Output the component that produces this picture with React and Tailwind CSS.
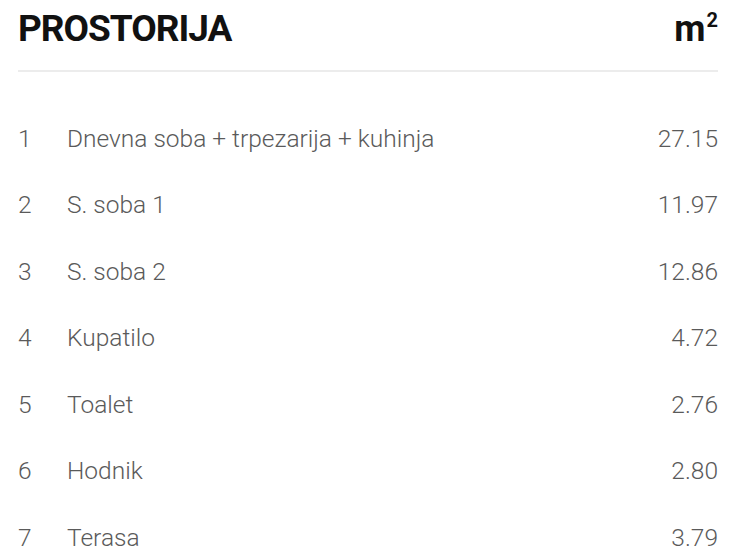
export default function App() {
  const rows = [
    ["1", "Dnevna soba + trpezarija + kuhinja", "27.15"],
    ["2", "S. soba 1", "11.97"],
    ["3", "S. soba 2", "12.86"],
    ["4", "Kupatilo", "4.72"],
    ["5", "Toalet", "2.76"],
    ["6", "Hodnik", "2.80"],
    ["7", "Terasa", "3.79"],
  ];
  return (
    <div className="w-[740px] h-[550px] overflow-hidden bg-white pl-[18px] pr-[22px] pt-[11px]" style={{ fontFamily: "Roboto, 'Liberation Sans', sans-serif" }}>
      <div className="flex items-start justify-between h-[36px]">
        <div className="text-[37px] leading-[36px] font-bold text-[#111] tracking-[-1px]">PROSTORIJA</div>
        <div className="flex items-start text-[#111] font-bold">
          <span className="text-[36px] leading-[36px]">m</span>
          <span className="text-[20px] leading-none -mt-[1px] ml-[1px]">2</span>
        </div>
      </div>
      <div className="mt-[23px] h-[2px] bg-[#ececec]" />
      <div className="mt-[34px]">
        {rows.map(([n, name, val]) => (
          <div key={n} className="flex items-center h-[66.5px] text-[24.5px] text-[#5a5a5a] font-light">
            <div className="w-[49px]">{n}</div>
            <div className="flex-1">{name}</div>
            <div>{val}</div>
          </div>
        ))}
      </div>
    </div>
  );
}
